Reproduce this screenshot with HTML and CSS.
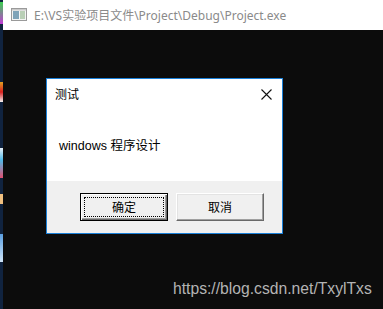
FILE: index.html
```
<!DOCTYPE html>
<html lang="zh-CN">
	<head>
		<meta charset="UTF-8" />
		<title>Project.exe</title>
		<link rel="stylesheet" href="styles.css">
	</head>
	<body>
		<div class="desk">
			<div class="strip">
				<span class="bit bit-a"></span>
				<span class="bit bit-b"></span>
				<span class="bit bit-c"></span>
				<span class="bit bit-d"></span>
				<span class="bit bit-e"></span>
			</div>
			<div class="window">
				<div class="titlebar">
					<svg class="app-icon" width="16" height="13" viewBox="0 0 16 13">
						<rect x="0.5" y="0.5" width="15" height="12" fill="#f4f4f4" stroke="#9a9a9a" />
						<rect x="2" y="3" width="6" height="8" fill="#7fa3b8" />
						<rect x="9" y="3" width="5" height="8" fill="#b9cfb6" />
						<rect x="1" y="1" width="14" height="1.5" fill="#c9c9c9" />
					</svg>
					<span class="caption">E:\VS实验项目文件\Project\Debug\Project.exe</span>
				</div>
				<div class="console">
					<div class="dialog">
						<div class="dlg-head">
							<span class="dlg-title">测试</span>
							<svg class="close" width="11" height="11" viewBox="0 0 11 11">
								<path d="M0.5 0.5 L10.5 10.5 M10.5 0.5 L0.5 10.5" stroke="#111" stroke-width="1.1" />
							</svg>
						</div>
						<div class="dlg-body">windows 程序设计</div>
						<div class="dlg-foot">
							<button class="btn btn-default"><span class="focus">确定</span></button>
							<button class="btn">取消</button>
						</div>
					</div>
					<div class="mark">https://blog.csdn.net/TxylTxs</div>
				</div>
			</div>
		</div>
	</body>
</html>
```

FILE: styles.css
```
body {
	margin: 0;
	background: #0c0c0c;
	font-family: "Noto Sans", "Noto Sans CJK SC", sans-serif;
	overflow: hidden;
}

.desk {
	display: flex;
	height: 309px;
}

.strip {
	width: 3px;
	display: flex;
	flex-direction: column;
	background: #10233f;
}

.bit {
	display: block;
	width: 3px;
}

.bit-a {
	height: 22px;
	margin-top: 2px;
	background: linear-gradient(#3ccf4f, #c23bd6);
}

.bit-b {
	height: 20px;
	margin-top: 58px;
	background: linear-gradient(#e0a020, #d82020 50%, #f2f2f2);
}

.bit-c {
	height: 30px;
	margin-top: 46px;
	background: linear-gradient(#e8f0f8, #4fb8e8 40%, #e05070);
}

.bit-d {
	height: 10px;
	margin-top: 16px;
	background: #f0c080;
}

.bit-e {
	height: 28px;
	margin-top: 30px;
	background: linear-gradient(#5a9ee0, #cfe4f7);
}

.window {
	flex: 1;
	display: flex;
	flex-direction: column;
}

.titlebar {
	height: 30px;
	background: #fff;
	display: flex;
	align-items: center;
	padding-left: 8px;
	gap: 7px;
}

.app-icon {
	margin-top: -1px;
}

.caption {
	font-size: 12px;
	color: #8a8a8a;
}

.console {
	flex: 1;
	padding: 48px 0 0 43px;
	position: relative;
}

.dialog {
	width: 235px;
	border: 1px solid #1a80d8;
	background: #fff;
	font-size: 12px;
	color: #000;
}

.dlg-head {
	height: 30px;
	display: flex;
	align-items: center;
	justify-content: space-between;
	padding: 0 10px 0 8px;
}

.close {
	margin-top: 1px;
}

.dlg-body {
	height: 71px;
	display: flex;
	align-items: center;
	padding-left: 12px;
	padding-bottom: 1px;
	font-family: "Liberation Sans", "Noto Sans CJK SC", sans-serif;
	font-size: 12.5px;
}

.dlg-foot {
	height: 52px;
	background: #f0f0f0;
	display: flex;
	justify-content: flex-end;
	align-items: flex-start;
	gap: 8px;
	padding: 12px 18px 0 0;
	box-sizing: border-box;
}

.btn {
	width: 88px;
	height: 28px;
	padding: 0;
	font: inherit;
	font-size: 12px;
	color: #000;
	background: #f0f0f0;
	border: 1px solid;
	border-color: #fff #696969 #696969 #fff;
	box-shadow: inset -1px -1px 0 #a0a0a0, inset 1px 1px 0 #e3e3e3;
	display: flex;
	align-items: center;
	justify-content: center;
}

.btn-default {
	border-color: #000;
	box-shadow: inset 1px 1px 0 #fff, inset -1px -1px 0 #696969, inset -2px -2px 0 #a0a0a0;
	padding: 3px;
}

.focus {
	flex: 1;
	align-self: stretch;
	display: flex;
	align-items: center;
	justify-content: center;
	border: 1px dotted #000;
}

.mark {
	position: absolute;
	left: 170px;
	top: 250px;
	font-family: "Liberation Sans", Arial, sans-serif;
	font-size: 15.7px;
	color: #b4b4b4;
}
```
